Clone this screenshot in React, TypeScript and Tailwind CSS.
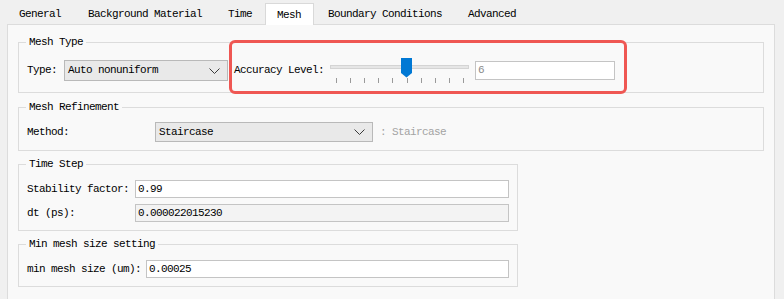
import React from 'react';

// Tabs across the top of the simulation settings dialog (width / left padding per tab)
const tabs = [
    { label: 'General', w: 'w-[69px]', pl: 'pl-[13px]' },
    { label: 'Background Material', w: 'w-[140px]', pl: 'pl-[13px]' },
    { label: 'Time', w: 'w-[50px]', pl: 'pl-[13px]' },
    { label: 'Mesh', w: 'w-[49px]', pl: 'pl-[11px]' },
    { label: 'Boundary Conditions', w: 'w-[140px]', pl: 'pl-[14px]' },
    { label: 'Advanced', w: 'w-[70px]', pl: 'pl-[14px]' },
];

const Chevron: React.FC = () => (
    <svg width="11" height="6" viewBox="0 0 11 6" className="shrink-0">
        <polyline points="0.5,0.5 5.5,5.5 10.5,0.5" fill="none" stroke="#3a3a3a" strokeWidth="1" />
    </svg>
);

const GroupBox: React.FC<{ title: string; className: string; children: React.ReactNode }> = ({ title, className, children }) => (
    <div className={`relative border border-[#dcdcdc] ${className}`}>
        <span className="absolute -top-[8px] left-[7px] bg-[#f9f9f9] px-[3px] leading-[14px]">{title}</span>
        {children}
    </div>
);

const Select: React.FC<{ value: string; className: string }> = ({ value, className }) => (
    <div className={`flex items-center justify-between border border-[#b9b9b9] bg-[#e9e9e9] pl-[3px] pr-[7px] ${className}`}>
        <span>{value}</span>
        <Chevron />
    </div>
);

const TextBox: React.FC<{ value: string; readOnly?: boolean; className: string }> = ({ value, readOnly, className }) => (
    <div className={`flex items-center border border-[#c4c4c4] pl-[2px] ${readOnly ? 'bg-[#f3f3f3]' : 'bg-white'} ${className}`}>
        {value}
    </div>
);

const AccuracySlider: React.FC = () => {
    const ticks = Array.from({ length: 10 }, (_, i) => 5.7 + i * 14.18);
    return (
        <svg width="140" height="26" viewBox="0 0 140 26" className="shrink-0">
            <rect x="0.5" y="7.5" width="138" height="3" fill="#e6e6e6" stroke="#d4d4d4" />
            {ticks.map((x) => (
                <line key={x} x1={Math.round(x) + 0.5} y1="20" x2={Math.round(x) + 0.5} y2="25" stroke="#9a9a9a" strokeWidth="1" />
            ))}
            <path d="M71 0 H82 V15 L76.5 19.5 L71 15 Z" fill="#0078d4" />
        </svg>
    );
};

export default function App() {
    return (
        <div className="relative w-[784px] h-[299px] overflow-hidden bg-[#f0f0f0] text-[11px] tracking-[-0.6px] text-black font-['Liberation_Mono',monospace]">
            {/* Tab strip */}
            <div className="flex items-end h-[25px] pl-[6px]">
                {tabs.map((t) =>
                    t.label === 'Mesh' ? (
                        <div key={t.label} className={`relative z-10 flex items-center h-[22px] pt-px bg-white border border-b-0 border-[#d9d9d9] ${t.w} ${t.pl}`}>
                            {t.label}
                        </div>
                    ) : (
                        <div key={t.label} className={`flex items-center h-[22px] pt-px ${t.w} ${t.pl}`}>
                            {t.label}
                        </div>
                    )
                )}
            </div>

            {/* Page body */}
            <div className="-mt-px ml-[7px] w-[768px] h-[280px] border border-[#dcdcdc] bg-[#f9f9f9] pl-[10px] pt-[17px]">
                <GroupBox title="Mesh Type" className="w-[746px] h-[51px] pl-[8px] pt-[17px]">
                    <div className="flex items-center h-[21px]">
                        <span className="w-[37px]">Type:</span>
                        <Select value="Auto nonuniform" className="w-[164px] h-[21px]" />
                        <span className="ml-[6px] w-[96px]">Accuracy Level:</span>
                        <AccuracySlider />
                        <TextBox value="6" className="ml-[5px] w-[140px] h-[19px] text-[#8a8a8a]" />
                    </div>
                </GroupBox>

                <GroupBox title="Mesh Refinement" className="mt-[14px] w-[746px] h-[44px] pl-[8px] pt-[14px]">
                    <div className="flex items-center h-[20px]">
                        <span className="w-[128px]">Method:</span>
                        <Select value="Staircase" className="w-[218px] h-[20px]" />
                        <span className="ml-[7px] text-[#a3a3a3]">: Staircase</span>
                    </div>
                </GroupBox>

                <GroupBox title="Time Step" className="mt-[13px] w-[500px] h-[67px] pl-[8px] pt-[15px]">
                    <div className="flex flex-col gap-[6px]">
                        <div className="flex items-center h-[18px]">
                            <span className="w-[108px]">Stability factor:</span>
                            <TextBox value="0.99" className="w-[374px] h-[18px]" />
                        </div>
                        <div className="flex items-center h-[18px]">
                            <span className="w-[108px]">dt (ps):</span>
                            <TextBox value="0.000022015230" readOnly className="w-[374px] h-[18px]" />
                        </div>
                    </div>
                </GroupBox>

                <GroupBox title="Min mesh size setting" className="mt-[13px] w-[500px] h-[43px] pl-[8px] pt-[15px]">
                    <div className="flex items-center h-[18px]">
                        <span className="w-[119px]">min mesh size (um):</span>
                        <TextBox value="0.00025" className="w-[363px] h-[18px]" />
                    </div>
                </GroupBox>
            </div>

            {/* Highlight annotation over the accuracy controls */}
            <div className="absolute left-[229px] top-[40px] w-[398px] h-[54px] rounded-[6px] border-[3px] border-[#ef5753]" />
        </div>
    );
}
